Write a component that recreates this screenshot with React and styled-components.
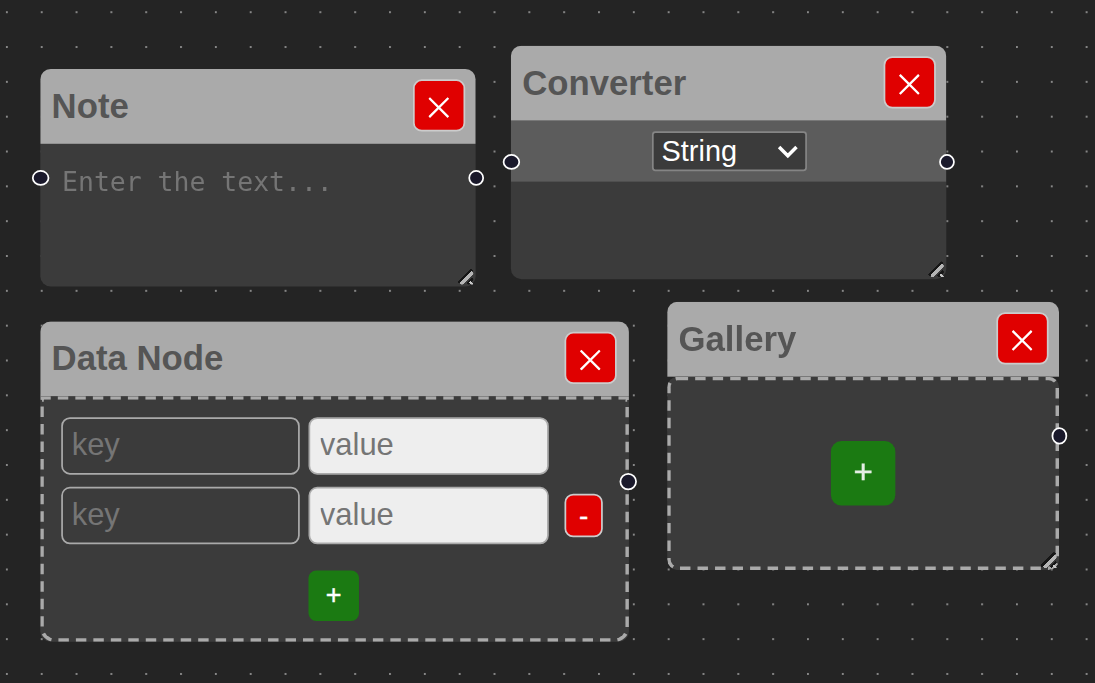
import React from "react";
import styled, { createGlobalStyle } from "styled-components";

const ZOOM = 1.7415;

const GlobalStyle = createGlobalStyle`
  * { box-sizing: border-box; }
  body { margin: 0; background: #242424; }
  button, input, textarea { font-family: inherit; margin: 0; outline: none; }
`;

const Canvas = styled.main`
  position: relative;
  width: 100vw;
  height: 100vh;
  overflow: hidden;
  background: #242424;
  font-family: "Liberation Sans", Arial, sans-serif;
`;

const Dots = styled.svg`
  display: block;
  width: 100%;
  height: 100%;
`;

const Viewport = styled.div`
  position: absolute;
  top: 0;
  left: 0;
  transform-origin: 0 0;
  transform: scale(${ZOOM});
`;

const NodeBox = styled.section`
  position: absolute;
  top: 0;
  left: 0;
  transform: translate(${(p) => p.$x / ZOOM}px, ${(p) => p.$y / ZOOM}px);
  width: ${(p) => p.$w}px;
  height: ${(p) => p.$h}px;
`;

const Card = styled.div`
  display: flex;
  flex-direction: column;
  width: 100%;
  height: 100%;
  overflow: hidden;
  border-radius: 6px;
  background: ${(p) => (p.$clear ? "linear-gradient(#3b3b3b, #3b3b3b) 0 60px no-repeat" : "#3b3b3b")};
`;

const Header = styled.header`
  display: flex;
  flex: none;
  align-items: center;
  justify-content: space-between;
  height: 43px;
  padding: 0 ${(p) => p.$inset}px 1px 6.5px;
  background: #aaa;
`;

const Title = styled.h3`
  margin: 0;
  padding-top: ${(p) => p.$drop}px;
  font-size: 19.95px;
  line-height: 23px;
  font-weight: 700;
  color: #555;
`;

const DangerButton = styled.button`
  display: flex;
  align-items: center;
  justify-content: center;
  width: ${(p) => p.$w}px;
  height: ${(p) => p.$h}px;
  padding: 0;
  border: 1px solid #ccc;
  border-radius: 5px;
  background: #e00000;
  color: #fff;
  font-size: 16px;
  -webkit-text-stroke: 0.2px #fff;
`;

const AddButton = styled.button`
  width: ${(p) => p.$size}px;
  height: ${(p) => p.$size}px;
  margin-right: ${(p) => p.$shift || 0}px;
  padding: 0 0 1px;
  border: 0;
  border-radius: ${(p) => p.$radius}px;
  background: #1b7a12;
  color: ${(p) => p.$color};
  font-size: ${(p) => p.$font}px;
  -webkit-text-stroke: 0.25px ${(p) => p.$color};
`;

const NoteText = styled.textarea`
  flex: 1;
  width: 100%;
  padding: 13px 12.5px;
  border: 0;
  resize: none;
  background: transparent;
  color: #fff;
  font-family: "DejaVu Sans Mono", monospace;
  font-size: 15.2px;
  line-height: 18px;
  &::placeholder { color: #757575; }
`;

const TypeBar = styled.div`
  display: flex;
  flex: none;
  align-items: center;
  justify-content: center;
  height: 35px;
  background: #5c5c5c;
`;

const TypeSelect = styled.div`
  display: flex;
  align-items: center;
  justify-content: space-between;
  width: 89px;
  height: 23px;
  padding: 0 4px 0 5px;
  border: 1px solid #858585;
  border-radius: 2px;
  background: #3b3b3b;
  color: #fff;
  font-size: 16.6px;
  line-height: 20px;
`;

const DashedBody = styled.div`
  display: flex;
  flex: 1;
  flex-direction: column;
  align-items: center;
  justify-content: ${(p) => (p.$centered ? "center" : "flex-start")};
  padding: ${(p) => (p.$centered ? 0 : "10px")};
  border: 2px dashed #aaa;
  border-radius: ${(p) => p.$radius};
  background: #3b3b3b;
`;

const Rows = styled.div`
  display: flex;
  flex-direction: column;
  gap: 7px;
  width: 100%;
  margin-bottom: 15px;
`;

const Row = styled.div`
  display: flex;
  align-items: center;
`;

const Field = styled.input`
  width: ${(p) => p.$w}px;
  height: 33px;
  margin-right: ${(p) => p.$gap}px;
  padding: 0 5px 0 ${(p) => (p.$light ? 5.5 : 5)}px;
  border: 1px solid #aaa;
  border-radius: 5px;
  background: ${(p) => (p.$light ? "#eee" : "transparent")};
  color: ${(p) => (p.$light ? "#222" : "#eee")};
  font-size: 17.8px;
  &::placeholder { color: #757575; }
`;

const Port = styled.span`
  position: absolute;
  top: 0;
  left: 0;
  width: ${(p) => p.$w}px;
  height: ${(p) => p.$h}px;
  transform: translate(${(p) => p.$x}px, ${(p) => p.$y}px);
  border: 1px solid #fff;
  border-radius: 50%;
  background: #1a192b;
`;

const Corner = styled.svg`
  position: absolute;
  right: 1px;
  bottom: 1px;
  width: 9px;
  height: 9px;
  transform: translate(-0.4px, -0.2px);
`;

const CrossIcon = styled.svg`
  width: 12px;
  height: 12px;
  transform: translate(-0.2px, 1.2px);
`;

const ChevronIcon = styled.svg`
  width: 12px;
  height: 8px;
  transform: translate(0, -0.1px);
`;

const Cross = () => (
  <CrossIcon viewBox="0 0 12 12">
    <path d="M0.5 0.5 L11.5 11.5 M11.5 0.5 L0.5 11.5" stroke="#fff" strokeWidth="1.35" />
  </CrossIcon>
);

const Chevron = () => (
  <ChevronIcon viewBox="0 0 12 8">
    <path d="M1 1.2 L6 6.2 L11 1.2" fill="none" stroke="#fff" strokeWidth="2" />
  </ChevronIcon>
);

const ResizeGrip = () => (
  <Corner viewBox="0 0 16 16" shapeRendering="crispEdges">
    <path d="M0.5 14.5 L14.5 0.5" stroke="#161616" strokeWidth="2.8" />
    <path d="M3.5 15.5 L15.5 3.5" stroke="#b5b5b5" strokeWidth="3.8" />
    <path d="M10 15.5 L15.5 10" stroke="#161616" strokeWidth="2.4" />
    <path d="M12.5 13 L15.5 16" stroke="#c8c8c8" strokeWidth="2" />
  </Corner>
);

function FlowNode({ title, x, y, w, h, ports, resizable, clear, inset = 6, drop = 1, children }) {
  return (
    <NodeBox $x={x} $y={y} $w={w} $h={h}>
      <Card $clear={clear}>
        <Header $inset={inset}>
          <Title $drop={drop}>{title}</Title>
          <DangerButton $w={30} $h={30} aria-label="Remove node">
            <Cross />
          </DangerButton>
        </Header>
        {children}
      </Card>
      {resizable && <ResizeGrip />}
      {ports.map((p) => (
        <Port key={p.x} $x={p.x} $y={p.y} $w={p.w} $h={p.h} />
      ))}
    </NodeBox>
  );
}

export default function App() {
  return (
    <>
      <GlobalStyle />
      <Canvas>
        <Dots>
          <defs>
            <pattern id="dots" x="5.93" y="11.2" width="34.83" height="34.83" patternUnits="userSpaceOnUse">
              <circle cx="0.95" cy="0.95" r="0.95" fill="#aaa" />
            </pattern>
          </defs>
          <rect width="100%" height="100%" fill="url(#dots)" />
        </Dots>
        <Viewport>
          <FlowNode title="Note" x={40.3} y={68.9} w={250} h={125} resizable
            ports={[{ x: -4.8, y: 58.1, w: 10, h: 9 }, { x: 245.8, y: 58.1, w: 9, h: 9 }]}>
            <NoteText placeholder="Enter the text..." />
          </FlowNode>

          <FlowNode title="Converter" x={510.9} y={45.8} w={250} h={134} resizable
            ports={[{ x: -4.7, y: 62.2, w: 10, h: 9 }, { x: 245.9, y: 62.2, w: 9, h: 9 }]}>
            <TypeBar>
              <TypeSelect>
                String
                <Chevron />
              </TypeSelect>
            </TypeBar>
          </FlowNode>

          <FlowNode title="Data Node" x={40.3} y={321.4} w={338} h={184} inset={7} drop={0}
            ports={[{ x: 332.6, y: 87, w: 10, h: 10 }]}>
            <DashedBody $radius="0 0 8px 8px">
              <Rows>
                <Row>
                  <Field $w={137} $gap={5} placeholder="key" />
                  <Field $w={138} $gap={9} $light placeholder="value" />
                </Row>
                <Row>
                  <Field $w={137} $gap={5} placeholder="key" />
                  <Field $w={138} $gap={9} $light placeholder="value" />
                  <DangerButton $w={22} $h={25}>-</DangerButton>
                </Row>
              </Rows>
              <AddButton $size={29} $shift={1} $radius={4.5} $font={15.5} $color="#fff">+</AddButton>
            </DashedBody>
          </FlowNode>

          <FlowNode title="Gallery" x={667.2} y={301.8} w={225} h={154} resizable clear drop={0}
            ports={[{ x: 220.7, y: 72, w: 9, h: 10 }]}>
            <DashedBody $centered $radius="6px">
              <AddButton $size={37} $radius={6} $font={19} $color="#e4eee4">+</AddButton>
            </DashedBody>
          </FlowNode>
        </Viewport>
      </Canvas>
    </>
  );
}
